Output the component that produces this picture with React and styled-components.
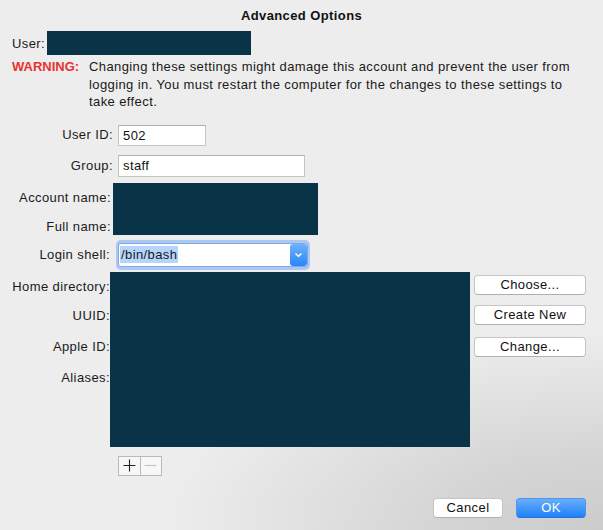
import React from "react";
import styled, { createGlobalStyle } from "styled-components";

const GlobalStyle = createGlobalStyle`
  html, body {
    margin: 0;
    padding: 0;
  }
  body {
    font-family: "Liberation Sans", Arial, sans-serif;
    font-size: 13px;
    letter-spacing: 0.4px;
    color: #1a1a1a;
  }
`;

const Dialog = styled.div`
  width: 603px;
  height: 530px;
  box-sizing: border-box;
  background: radial-gradient(ellipse 440px 200px at 100% 100%, #cccccc 0%, #d4d4d4 35%, #ededed 100%), #ededed;
  display: flex;
  flex-direction: column;
  overflow: hidden;
`;

const Title = styled.div`
  padding-top: 8px;
  height: 16px;
  line-height: 16px;
  text-align: center;
  font-weight: bold;
  font-size: 13px;
  color: #111;
`;

const UserRow = styled.div`
  display: flex;
  align-items: center;
  margin-top: 7px;
  padding-left: 12px;
  gap: 2px;
`;

const Redacted = styled.div`
  background: #093448;
  width: ${(p) => p.$w}px;
  height: ${(p) => p.$h}px;
  flex-shrink: 0;
`;

const Warning = styled.div`
  display: grid;
  grid-template-columns: 77px 1fr;
  margin-top: 3px;
  padding-left: 12px;
  line-height: 17.5px;
  white-space: nowrap;
`;

const WarnLabel = styled.span`
  color: #e8322f;
  font-weight: bold;
  letter-spacing: 0;
`;

const Form = styled.div`
  display: flex;
  flex-direction: column;
  margin-top: 14px;
`;

const Row = styled.div`
  display: flex;
  align-items: ${(p) => p.$align || "center"};
  margin-top: ${(p) => p.$mt || 0}px;
  gap: ${(p) => p.$gap || 0}px;
`;

const Label = styled.div`
  width: ${(p) => p.$w || 113}px;
  text-align: right;
  line-height: 16px;
  white-space: nowrap;
  flex-shrink: 0;
`;

const LabelColumn = styled.div`
  width: ${(p) => p.$w}px;
  display: flex;
  flex-direction: column;
  align-items: flex-end;
  padding-top: 7px;
  flex-shrink: 0;

  & > div {
    line-height: 16px;
    white-space: nowrap;
  }
`;

const Spaced = styled.div`
  margin-top: ${(p) => p.$mt}px;
`;

const TextField = styled.div`
  width: ${(p) => p.$w}px;
  height: ${(p) => p.$h}px;
  box-sizing: border-box;
  background: #fff;
  border: 1px solid #c4c4c4;
  border-top-color: #b0b0b0;
  padding: 0 4px;
  display: flex;
  align-items: center;
  font-size: 13px;
  color: #111;
`;

const FocusRing = styled.div`
  width: 194px;
  height: 30px;
  box-sizing: border-box;
  border-radius: 5px;
  background: #a9c8f4;
  padding: 3px 2px;
  display: flex;
`;

const Select = styled.div`
  flex: 1;
  background: #fff;
  border: 1px solid #7fa8e6;
  border-radius: 3px;
  display: flex;
  align-items: center;
  padding-left: 1px;
  box-sizing: border-box;
`;

const Selected = styled.span`
  background: #b5d5fd;
  padding: 0 1px;
  line-height: 17px;
`;

const ArrowBox = styled.div`
  margin-left: auto;
  width: 17px;
  height: 22px;
  border-radius: 3px;
  background: linear-gradient(#6eb2fb, #2a86f6);
  display: flex;
  align-items: center;
  justify-content: center;
`;

const ButtonColumn = styled.div`
  display: flex;
  flex-direction: column;
  padding-top: 3px;
  margin-left: 4px;
`;

const PushButton = styled.div`
  width: ${(p) => p.$w || 112}px;
  height: 20px;
  box-sizing: border-box;
  border-radius: 4px;
  background: ${(p) => (p.$primary ? "linear-gradient(#69aefb, #1f81f8)" : "#fff")};
  border: 1px solid ${(p) => (p.$primary ? "#4d95f2" : "#c6c6c6")};
  border-bottom-color: ${(p) => (p.$primary ? "#2a72d8" : "#b0b0b0")};
  color: ${(p) => (p.$primary ? "#fff" : "#111")};
  display: flex;
  align-items: center;
  justify-content: center;
  font-size: 13px;
  margin-top: ${(p) => p.$mt || 0}px;
`;

const Segmented = styled.div`
  display: flex;
  margin-top: 9px;
  margin-left: 118px;
  border: 1px solid #b9b9b9;
  width: 44px;
  height: 20px;
  box-sizing: border-box;
  background: #f7f7f7;
`;

const Segment = styled.div`
  flex: 1;
  display: flex;
  align-items: center;
  justify-content: center;
  border-left: ${(p) => (p.$divider ? "1px solid #b9b9b9" : "none")};
`;

const Footer = styled.div`
  display: flex;
  justify-content: flex-end;
  gap: 13px;
  margin-top: 22px;
  padding-right: 17px;
`;

const App = () => {
  return (
    <Dialog>
      <GlobalStyle />
      <Title>Advanced Options</Title>

      <UserRow>
        <span>User:</span>
        <Redacted $w={204} $h={24} />
      </UserRow>

      <Warning>
        <WarnLabel>WARNING:</WarnLabel>
        <span>
          Changing these settings might damage this account and prevent the user from
          <br />
          logging in. You must restart the computer for the changes to these settings to
          <br />
          take effect.
        </span>
      </Warning>

      <Form>
        <Row $gap={5}>
          <Label>User ID:</Label>
          <TextField $w={88} $h={21}>502</TextField>
        </Row>

        <Row $gap={5} $mt={9}>
          <Label>Group:</Label>
          <TextField $w={187} $h={22}>staff</TextField>
        </Row>

        <Row $align="flex-start" $mt={6} $gap={2}>
          <LabelColumn $w={111}>
            <div>Account name:</div>
            <Spaced $mt={13}>Full name:</Spaced>
          </LabelColumn>
          <Redacted $w={205} $h={52} />
        </Row>

        <Row $gap={6} $mt={5}>
          <Label $w={110}>Login shell:</Label>
          <FocusRing>
            <Select>
              <Selected>/bin/bash</Selected>
              <ArrowBox>
                <svg width="9" height="6" viewBox="0 0 9 6">
                  <path d="M1.5 1.5 L4.5 4.3 L7.5 1.5" fill="none" stroke="#fff" strokeWidth="1.4" />
                </svg>
              </ArrowBox>
            </Select>
          </FocusRing>
        </Row>

        <Row $align="flex-start" $mt={2}>
          <LabelColumn $w={110}>
            <div>Home directory:</div>
            <Spaced $mt={13}>UUID:</Spaced>
            <Spaced $mt={15}>Apple ID:</Spaced>
            <Spaced $mt={15}>Aliases:</Spaced>
          </LabelColumn>
          <Redacted $w={360} $h={175} />
          <ButtonColumn>
            <PushButton>Choose...</PushButton>
            <PushButton $mt={10}>Create New</PushButton>
            <PushButton $mt={12}>Change...</PushButton>
          </ButtonColumn>
        </Row>

        <Segmented>
          <Segment>
            <svg width="13" height="13" viewBox="0 0 13 13">
              <path d="M6.5 0.5 V12.5 M0.5 6.5 H12.5" stroke="#222" strokeWidth="1.1" />
            </svg>
          </Segment>
          <Segment $divider>
            <svg width="13" height="13" viewBox="0 0 13 13">
              <path d="M0.5 6.5 H12.5" stroke="#c4c4c4" strokeWidth="1.1" />
            </svg>
          </Segment>
        </Segmented>
      </Form>

      <Footer>
        <PushButton $w={70}>Cancel</PushButton>
        <PushButton $w={70} $primary>OK</PushButton>
      </Footer>
    </Dialog>
  );
};

export default App;
